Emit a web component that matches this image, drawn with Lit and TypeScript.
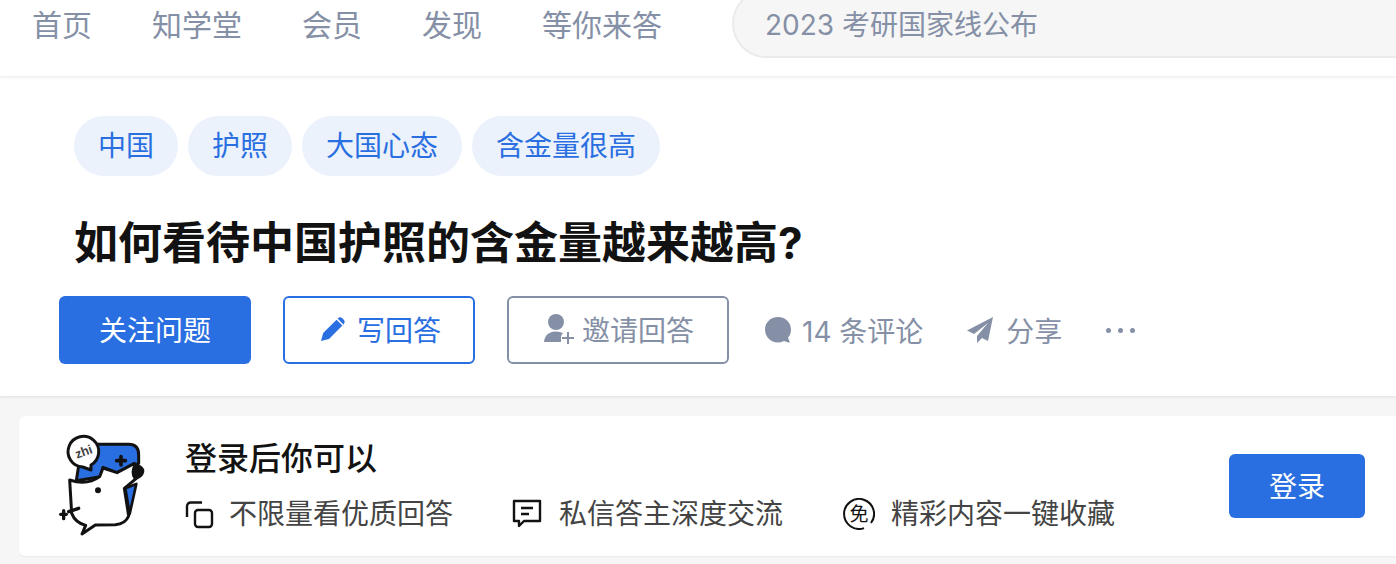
import { LitElement, html, css } from "lit";
import { customElement } from "lit/decorators.js";

@customElement("app-root")
export class AppRoot extends LitElement {
  static styles = css`
    :host {
      display: block;
      width: 1396px;
      height: 564px;
      overflow: hidden;
      background: #f6f6f6;
      font-family: Inter, "Noto Sans CJK SC", sans-serif;
    }
    .nav {
      position: relative;
      z-index: 2;
      height: 76px;
      background: #fff;
      box-shadow: 0 1px 3px rgba(18, 18, 18, 0.1);
      display: flex;
      align-items: flex-start;
      padding-left: 32px;
      box-sizing: border-box;
    }
    .nav-links { display: flex; gap: 60px; font-size: 30px; line-height: 50px; color: #8590a6; white-space: nowrap; }
    .search {
      margin: -11px 0 0 70px;
      width: 800px;
      height: 69px;
      box-sizing: border-box;
      flex: none;
      background: #f6f6f6;
      border: 2px solid #ebebeb;
      border-radius: 46px;
      padding: 9px 0 0 31px;
      font-size: 28px;
      line-height: 50px;
      color: #8590a6;
      white-space: nowrap;
    }
    .question {
      height: 320px;
      box-sizing: border-box;
      background: #fff;
      box-shadow: 0 1px 3px rgba(18, 18, 18, 0.1);
      padding: 40px 0 0 59px;
    }
    .tags { display: flex; gap: 10px; margin-left: 15px; }
    .tag {
      height: 60px;
      line-height: 61px;
      padding: 0 24px;
      border-radius: 30px;
      background: #ebf2fc;
      color: #2a6fe1;
      font-size: 28px;
      white-space: nowrap;
    }
    h1 {
      margin: 33px 0 0 15px;
      font-size: 44px;
      line-height: 68px;
      height: 68px;
      font-weight: 700;
      color: #121212;
      white-space: nowrap;
    }
    .actions { display: flex; align-items: center; margin-top: 19px; color: #8590a6; font-size: 28px; }
    .btn {
      height: 68px;
      box-sizing: border-box;
      border-radius: 6px;
      display: flex;
      align-items: center;
      white-space: nowrap;
      padding-bottom: 2px;
    }
    .primary { width: 192px; background: #2a6fe1; color: #fff; justify-content: center; }
    .outline-blue { width: 192px; margin-left: 32px; border: 2px solid #2a6fe1; color: #2a6fe1; gap: 11px; padding-left: 35px; }
    .outline-gray { width: 222px; margin-left: 32px; border: 2px solid #8590a6; gap: 7px; padding-left: 34px; }
    .act { display: flex; align-items: center; white-space: nowrap; }
    .comment { margin-left: 35px; gap: 10px; }
    .share { margin-left: 43px; gap: 12px; }
    .more { margin-left: 44px; display: flex; gap: 7px; }
    .more i { width: 5px; height: 5px; border-radius: 50%; background: #8590a6; }
    .card {
      margin: 20px 0 0 19px;
      width: 1400px;
      height: 140px;
      box-sizing: border-box;
      background: #fff;
      border-radius: 6px;
      box-shadow: 0 1px 2px rgba(18, 18, 18, 0.05);
      display: flex;
      align-items: flex-start;
      position: relative;
    }
    .logo { margin: 17px 0 0 38px; flex: none; display: block; }
    .body { margin: 19px 0 0 38px; width: 1044px; flex: none; }
    .body h2 { margin: 0; font-size: 32px; line-height: 48px; font-weight: 500; color: #121212; white-space: nowrap; }
    .items { display: flex; margin-top: 9px; font-size: 28px; line-height: 44px; color: #444; }
    .item { display: flex; align-items: center; white-space: nowrap; }
    .item svg { flex: none; }
    .i1 { gap: 15px; width: 327px; }
    .i2 { gap: 17px; width: 331px; }
    .i3 { gap: 16px; }
    .mian { font-size: 19px; fill: #121212; text-anchor: middle; font-family: "Noto Sans CJK SC", sans-serif; }
    .zhi { font-size: 38px; font-weight: 700; fill: #444; text-anchor: middle; font-family: "Liberation Sans", sans-serif; }
    .login {
      width: 136px;
      height: 64px;
      margin-top: 38px;
      padding-bottom: 2px;
      box-sizing: border-box;
      flex: none;
      background: #2a6fe1;
      color: #fff;
      border-radius: 6px;
      font-size: 28px;
      display: flex;
      align-items: center;
      justify-content: center;
    }
  `;

  render() {
    return html`
      <div class="nav">
        <div class="nav-links">
          <span>首页</span><span>知学堂</span><span>会员</span><span>发现</span><span>等你来答</span>
        </div>
        <div class="search">2023 考研国家线公布</div>
      </div>
      <div class="question">
        <div class="tags">
          <span class="tag">中国</span><span class="tag">护照</span><span class="tag">大国心态</span><span class="tag">含金量很高</span>
        </div>
        <h1>如何看待中国护照的含金量越来越高?</h1>
        <div class="actions">
          <div class="btn primary">关注问题</div>
          <div class="btn outline-blue">
            <svg width="26" height="26" viewBox="0 0 26 26" fill="#2a6fe1"><path d="M1 25 L3.2 17 L16.5 3.7 L22.4 9.6 L9 23 Z"/><path d="M18 2.2 Q20 .4 22 2 L24 4 Q25.6 6 23.8 8 L23.4 8.4 L17.6 2.6 Z"/></svg>
            <span>写回答</span>
          </div>
          <div class="btn outline-gray">
            <svg width="32" height="32" viewBox="0 0 32 32" fill="#8590a6"><circle cx="13" cy="9" r="8"/><path d="M1 29 Q1 26 3 23 Q6 18.500 13 18.500 Q17 18.500 20 20 Q18 22 18 24 L18 29 Z"/><path d="M24 19h2v5h5v2h-5v5h-2v-5h-5v-2h5z"/></svg>
            <span>邀请回答</span>
          </div>
          <div class="act comment">
            <svg width="28" height="28" viewBox="0 0 28 28" fill="#8590a6"><path d="M14 1 C21.500 1 27 6.500 27 13.500 C27 17 26 19.500 24 21.500 L25.500 25.500 Q26 27 24.500 26.500 L20 25 C18 26 16 26.500 14 26.500 C6.500 26.500 1 20.500 1 13.500 C1 6.500 6.500 1 14 1 Z"/></svg>
            <span>14 条评论</span>
          </div>
          <div class="act share">
            <svg width="28" height="28" viewBox="0 0 28 28" fill="#8590a6"><path d="M27 1 L1 14.500 L8 18 L22 7 L11 20 L11 27 L16 22 L22 25 Z"/></svg>
            <span>分享</span>
          </div>
          <div class="more"><i></i><i></i><i></i></div>
        </div>
      </div>
      <div class="card">
        <svg class="logo" width="90" height="104" viewBox="170 70 270 310">
          <path d="M236 160 L228 212 L300 200 L308 172 L350 188 L415 160 L415 135 Q415 103 385 103 L290 103 Z" fill="#2a6fe1" stroke="#121212" stroke-width="9" stroke-linejoin="round"/>
          <path d="M375 235 L408 222 L388 312 Z" fill="#2a6fe1" stroke="#121212" stroke-width="8" stroke-linejoin="round"/>
          <path d="M208 210 Q260 228 298 200 L308 174 L350 188 L402 160 L408 205 L372 235 L385 318 Q375 342 345 344 L285 345 L245 372 L256 346 Q225 338 214 310 Z" fill="#fff" stroke="#121212" stroke-width="9" stroke-linejoin="round"/>
          <path d="M402 160 Q432 165 432 185 Q428 205 402 210 Q385 190 402 160 Z" fill="#121212"/>
          <path d="M247 171 A46 46 0 1 1 272 165 L272 180 Z" fill="#fff" stroke="#121212" stroke-width="9" stroke-linejoin="round"/>
          <text class="zhi" x="250" y="138" transform="rotate(-20 250 125)">zhi</text>
          <circle cx="293" cy="241" r="9" fill="#121212"/>
          <path d="M362 140 V165 M349 152 H375" stroke="#121212" stroke-width="11" stroke-linecap="round"/>
          <path d="M181 313 H198 M190 302 V326 M205 305 L235 295" stroke="#121212" stroke-width="10" stroke-linecap="round"/>
        </svg>
        <div class="body">
          <h2>登录后你可以</h2>
          <div class="items">
            <div class="item i1">
              <svg width="29" height="29" viewBox="0 0 29 29" fill="none" stroke="#121212" stroke-width="2.400"><rect x="10" y="10" width="17" height="17" rx="3"/><path d="M17 2.500 H6 Q2 2.500 2 6.500 V17"/></svg>
              <span>不限量看优质回答</span>
            </div>
            <div class="item i2">
              <svg width="30" height="30" viewBox="0 0 30 30" fill="none" stroke="#121212" stroke-width="2.400" stroke-linejoin="round"><path d="M2 2 H28 V22 H12 L7 27 V22 H2 Z"/><path d="M9 9 H21 M9 15 H17"/></svg>
              <span>私信答主深度交流</span>
            </div>
            <div class="item i3">
              <svg width="32" height="32" viewBox="0 0 32 32" fill="none" stroke="#121212" stroke-width="2"><path d="M28 25 A15 15 0 1 0 21 30.100"/><text class="mian" x="16" y="23" stroke="none">免</text></svg>
              <span>精彩内容一键收藏</span>
            </div>
          </div>
        </div>
        <div class="login">登录</div>
      </div>
    `;
  }
}
